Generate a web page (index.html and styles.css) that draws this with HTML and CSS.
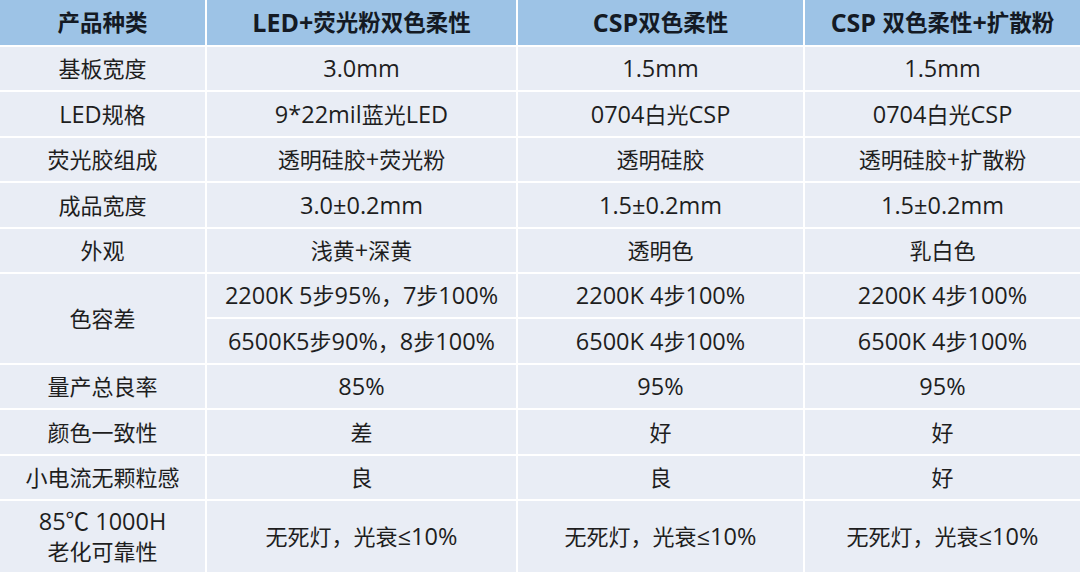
FILE: index.html
```html
<!DOCTYPE html>
<html lang="zh-CN">
<head>
<meta charset="utf-8">
<link rel="stylesheet" href="styles.css">
</head>
<body>
<div class="table">
  <div class="cell head">产品种类</div>
  <div class="cell head"><span class="l">LED+</span>荧光粉双色柔性</div>
  <div class="cell head"><span class="l">CSP</span>双色柔性</div>
  <div class="cell head"><span class="l">CSP&nbsp;</span>双色柔性<span class="l">+</span>扩散粉</div>

  <div class="cell">基板宽度</div>
  <div class="cell"><span class="l">3.0mm</span></div>
  <div class="cell"><span class="l">1.5mm</span></div>
  <div class="cell"><span class="l">1.5mm</span></div>

  <div class="cell"><span class="l">LED</span>规格</div>
  <div class="cell"><span class="l">9*22mil</span>蓝光<span class="l">LED</span></div>
  <div class="cell"><span class="l">0704</span>白光<span class="l">CSP</span></div>
  <div class="cell"><span class="l">0704</span>白光<span class="l">CSP</span></div>

  <div class="cell">荧光胶组成</div>
  <div class="cell">透明硅胶<span class="l">+</span>荧光粉</div>
  <div class="cell">透明硅胶</div>
  <div class="cell">透明硅胶<span class="l">+</span>扩散粉</div>

  <div class="cell">成品宽度</div>
  <div class="cell"><span class="l">3.0±0.2mm</span></div>
  <div class="cell"><span class="l">1.5±0.2mm</span></div>
  <div class="cell"><span class="l">1.5±0.2mm</span></div>

  <div class="cell">外观</div>
  <div class="cell">浅黄<span class="l">+</span>深黄</div>
  <div class="cell">透明色</div>
  <div class="cell">乳白色</div>

  <div class="cell span2">色容差</div>
  <div class="cell"><span class="l">2200K 5</span>步<span class="l">95%</span>，<span class="l">7</span>步<span class="l">100%</span></div>
  <div class="cell"><span class="l">2200K 4</span>步<span class="l">100%</span></div>
  <div class="cell"><span class="l">2200K 4</span>步<span class="l">100%</span></div>
  <div class="cell"><span class="l">6500K5</span>步<span class="l">90%</span>，<span class="l">8</span>步<span class="l">100%</span></div>
  <div class="cell"><span class="l">6500K 4</span>步<span class="l">100%</span></div>
  <div class="cell"><span class="l">6500K 4</span>步<span class="l">100%</span></div>

  <div class="cell">量产总良率</div>
  <div class="cell"><span class="l">85%</span></div>
  <div class="cell"><span class="l">95%</span></div>
  <div class="cell"><span class="l">95%</span></div>

  <div class="cell">颜色一致性</div>
  <div class="cell">差</div>
  <div class="cell">好</div>
  <div class="cell">好</div>

  <div class="cell">小电流无颗粒感</div>
  <div class="cell">良</div>
  <div class="cell">良</div>
  <div class="cell">好</div>

  <div class="cell two-line"><span class="l">85℃ 1000H</span><br>老化可靠性</div>
  <div class="cell">无死灯，光衰<span class="l">≤10%</span></div>
  <div class="cell">无死灯，光衰<span class="l">≤10%</span></div>
  <div class="cell">无死灯，光衰<span class="l">≤10%</span></div>
</div>
</body>
</html>
```

FILE: styles.css
```css
html, body {
  margin: 0;
  padding: 0;
  background: #ffffff;
}

body {
  width: 1080px;
  height: 578px;
  overflow: hidden;
  font-family: "Open Sans", "Noto Sans CJK SC", sans-serif;
  color: #1e1e1e;
}

.table {
  display: grid;
  grid-template-columns: 205px 309px 285px 275px;
  grid-template-rows: 45px repeat(10, 43.4px) 71px;
  column-gap: 2px;
  row-gap: 2px;
  background: #ffffff;
}

.cell {
  display: flex;
  align-items: center;
  justify-content: center;
  text-align: center;
  background: #e9edf5;
  font-size: 22px;
  line-height: 1.3;
  white-space: nowrap;
}

.l {
  font-size: 23.5px;
}

.head {
  background: #9dc3e6;
  font-weight: 700;
  font-size: 22.5px;
  color: #141a24;
}

.head .l {
  font-size: 25px;
}

.span2 {
  grid-row: span 2;
}

.two-line {
  display: block;
  padding-top: 5px;
  line-height: 30px;
}
```
